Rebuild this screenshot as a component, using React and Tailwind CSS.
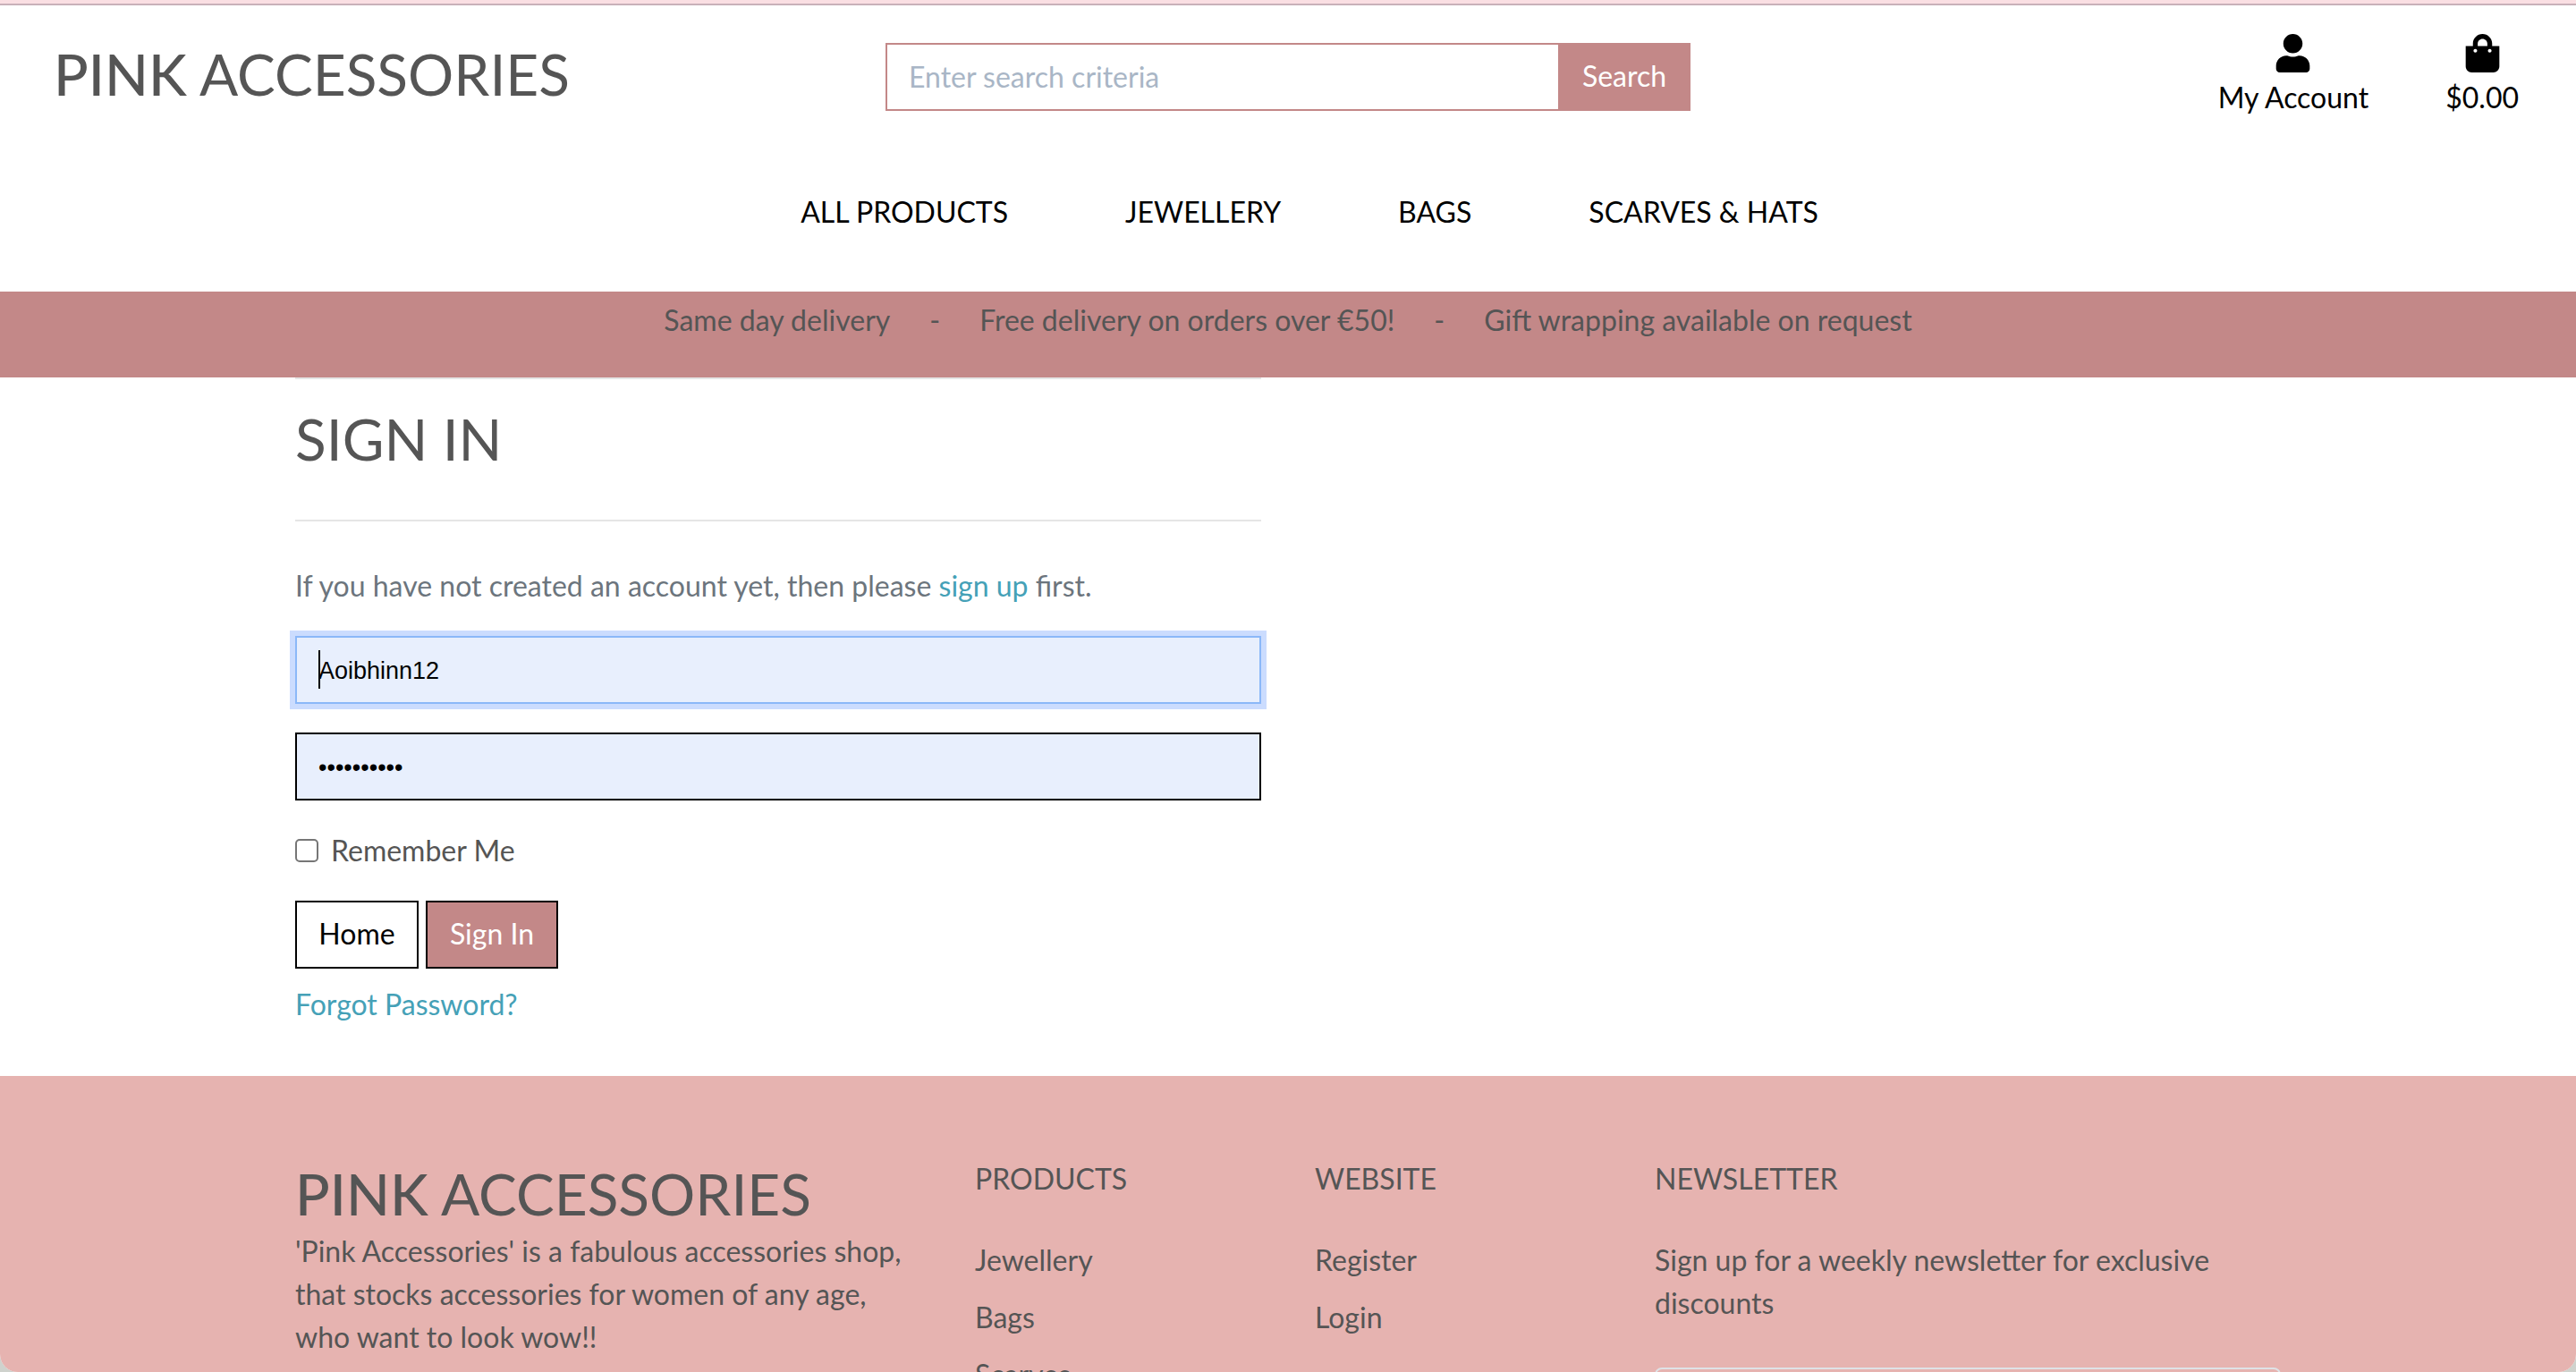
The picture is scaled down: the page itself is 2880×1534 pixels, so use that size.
import { FaUser, FaShoppingBag } from "react-icons/fa";

const navLinks = ["ALL PRODUCTS", "JEWELLERY", "BAGS", "SCARVES & HATS"];
const notices = ["Same day delivery", "-", "Free delivery on orders over €50!", "-", "Gift wrapping available on request"];

function Brand() {
  return (
    <a href="#home" className="block whitespace-nowrap text-[64px] leading-[77px]">
      <span className="font-medium">PINK</span> ACCESSORIES
    </a>
  );
}

function Header() {
  return (
    <header className="border-t-4 border-[#fadfe3] bg-white text-black">
      <div className="grid grid-cols-3 items-start border-t-2 border-[#c9b1b9]">
        <div className="mt-[38px] pl-[60px] text-[#555]">
          <Brand />
        </div>
        <form className="mx-[30px] mt-[42px] flex h-[76px]" onSubmit={(e) => e.preventDefault()}>
          <input
            type="text"
            aria-label="Search"
            placeholder="Enter search criteria"
            className="min-w-0 flex-1 border-2 border-r-0 border-[#c38888] px-6 outline-none placeholder:text-[#a9b6c6]"
          />
          <button type="submit" className="w-[148px] bg-[#c38888] pb-0.5 text-white">
            Search
          </button>
        </form>
        <div className="mt-8 flex justify-end gap-[86px] pr-16">
          <a href="#account" className="flex flex-col items-center">
            <FaUser className="mb-1 size-[43px]" />
            My Account
          </a>
          <a href="#bag" className="flex flex-col items-center">
            <FaShoppingBag className="mb-1 size-[43px]" />
            $0.00
          </a>
        </div>
      </div>
      <nav className="flex justify-center gap-[131px] pt-20 pb-[65px] pl-12">
        {navLinks.map((label) => (
          <a key={label} href="#products">
            {label}
          </a>
        ))}
      </nav>
    </header>
  );
}

function SignIn() {
  return (
    <main className="mx-auto w-full max-w-[2280px] px-[30px] pb-14">
      <form className="mr-[30px] w-[calc(50%-30px)]" onSubmit={(e) => e.preventDefault()}>
        <hr className="border-t-2 border-[#e5e5e5]" />
        <h1 className="mt-7 text-[64px] leading-[77px]">SIGN IN</h1>
        <hr className="mt-[52px] border-t-2 border-[#e5e5e5]" />
        <p className="mt-12 text-[#6c757d]">
          If you have not created an account yet, then please{" "}
          <a href="#signup" className="text-[#45a1b7]">
            sign up
          </a>{" "}
          first.
        </p>
        <div className="relative mt-8">
          <input
            type="text"
            aria-label="Username"
            defaultValue="Aoibhinn12"
            className="block h-[76px] w-full border-2 border-[#8bb8f8] bg-[#e8effd] px-6 pt-0.5 font-['Liberation_Sans',sans-serif] text-[27px] text-black ring-6 ring-[#cbdcfe] outline-none"
          />
          <span className="absolute top-4 left-[26px] h-[43px] w-0.5 bg-black" />
        </div>
        <input
          type="password"
          aria-label="Password"
          defaultValue="0123456789"
          className="mt-8 block h-[76px] w-full border-2 border-black bg-[#e8effd] px-6 pt-0.5 font-['Liberation_Sans',sans-serif] text-[27px] text-black outline-none"
        />
        <label className="mt-8 flex items-center gap-3.5">
          <input type="checkbox" className="size-[26px] appearance-none rounded-[5px] border-2 border-[#767676] bg-white" />
          Remember Me
        </label>
        <div className="mt-8 flex gap-2">
          <button type="button" className="h-[76px] w-[138px] border-2 border-black bg-white pb-0.5 text-black">
            Home
          </button>
          <button type="submit" className="h-[76px] w-[148px] border-2 border-black bg-[#c38888] pb-0.5 text-white">
            Sign In
          </button>
        </div>
        <a href="#forgot" className="mt-4 block text-[#45a1b7]">
          Forgot Password?
        </a>
      </form>
    </main>
  );
}

function LinkColumn({ title, links }) {
  return (
    <div className="col-span-2 px-[30px]">
      <h2>{title}</h2>
      <ul className="mt-[43px] flex flex-col gap-4">
        {links.map((label) => (
          <li key={label}>
            <a href="#shop">{label}</a>
          </li>
        ))}
      </ul>
    </div>
  );
}

function Footer() {
  return (
    <footer className="grow bg-[#e6b3b0] pt-[91px]">
      <div className="mx-auto grid max-w-[2280px] grid-cols-12">
        <div className="col-span-4 px-[30px] pt-0.5">
          <Brand />
          <p className="mt-0.5">
            'Pink Accessories' is a fabulous accessories shop, that stocks accessories for women of any age, who want to look wow!!
          </p>
        </div>
        <LinkColumn title="PRODUCTS" links={["Jewellery", "Bags", "Scarves"]} />
        <LinkColumn title="WEBSITE" links={["Register", "Login"]} />
        <div className="col-span-4 px-[30px]">
          <h2>NEWSLETTER</h2>
          <p className="mt-[43px]">Sign up for a weekly newsletter for exclusive discounts</p>
          <input
            type="email"
            aria-label="Newsletter email"
            className="mt-12 block h-[76px] w-full rounded-lg border-2 border-[#dee2e6] px-6 outline-none"
          />
        </div>
      </div>
    </footer>
  );
}

export default function App() {
  return (
    <div className="h-screen overflow-hidden bg-[#cfd2cd] font-[Lato,sans-serif] text-[32px] leading-[48px] text-[#555]">
      <div className="flex h-full flex-col overflow-hidden rounded-b-[20px] bg-white *:shrink-0">
        <Header />
        <div className="flex justify-center gap-11 bg-[#c38888] pt-2 pb-10">
          {notices.map((text, i) => (
            <span key={i}>{text}</span>
          ))}
        </div>
        <SignIn />
        <Footer />
      </div>
    </div>
  );
}
